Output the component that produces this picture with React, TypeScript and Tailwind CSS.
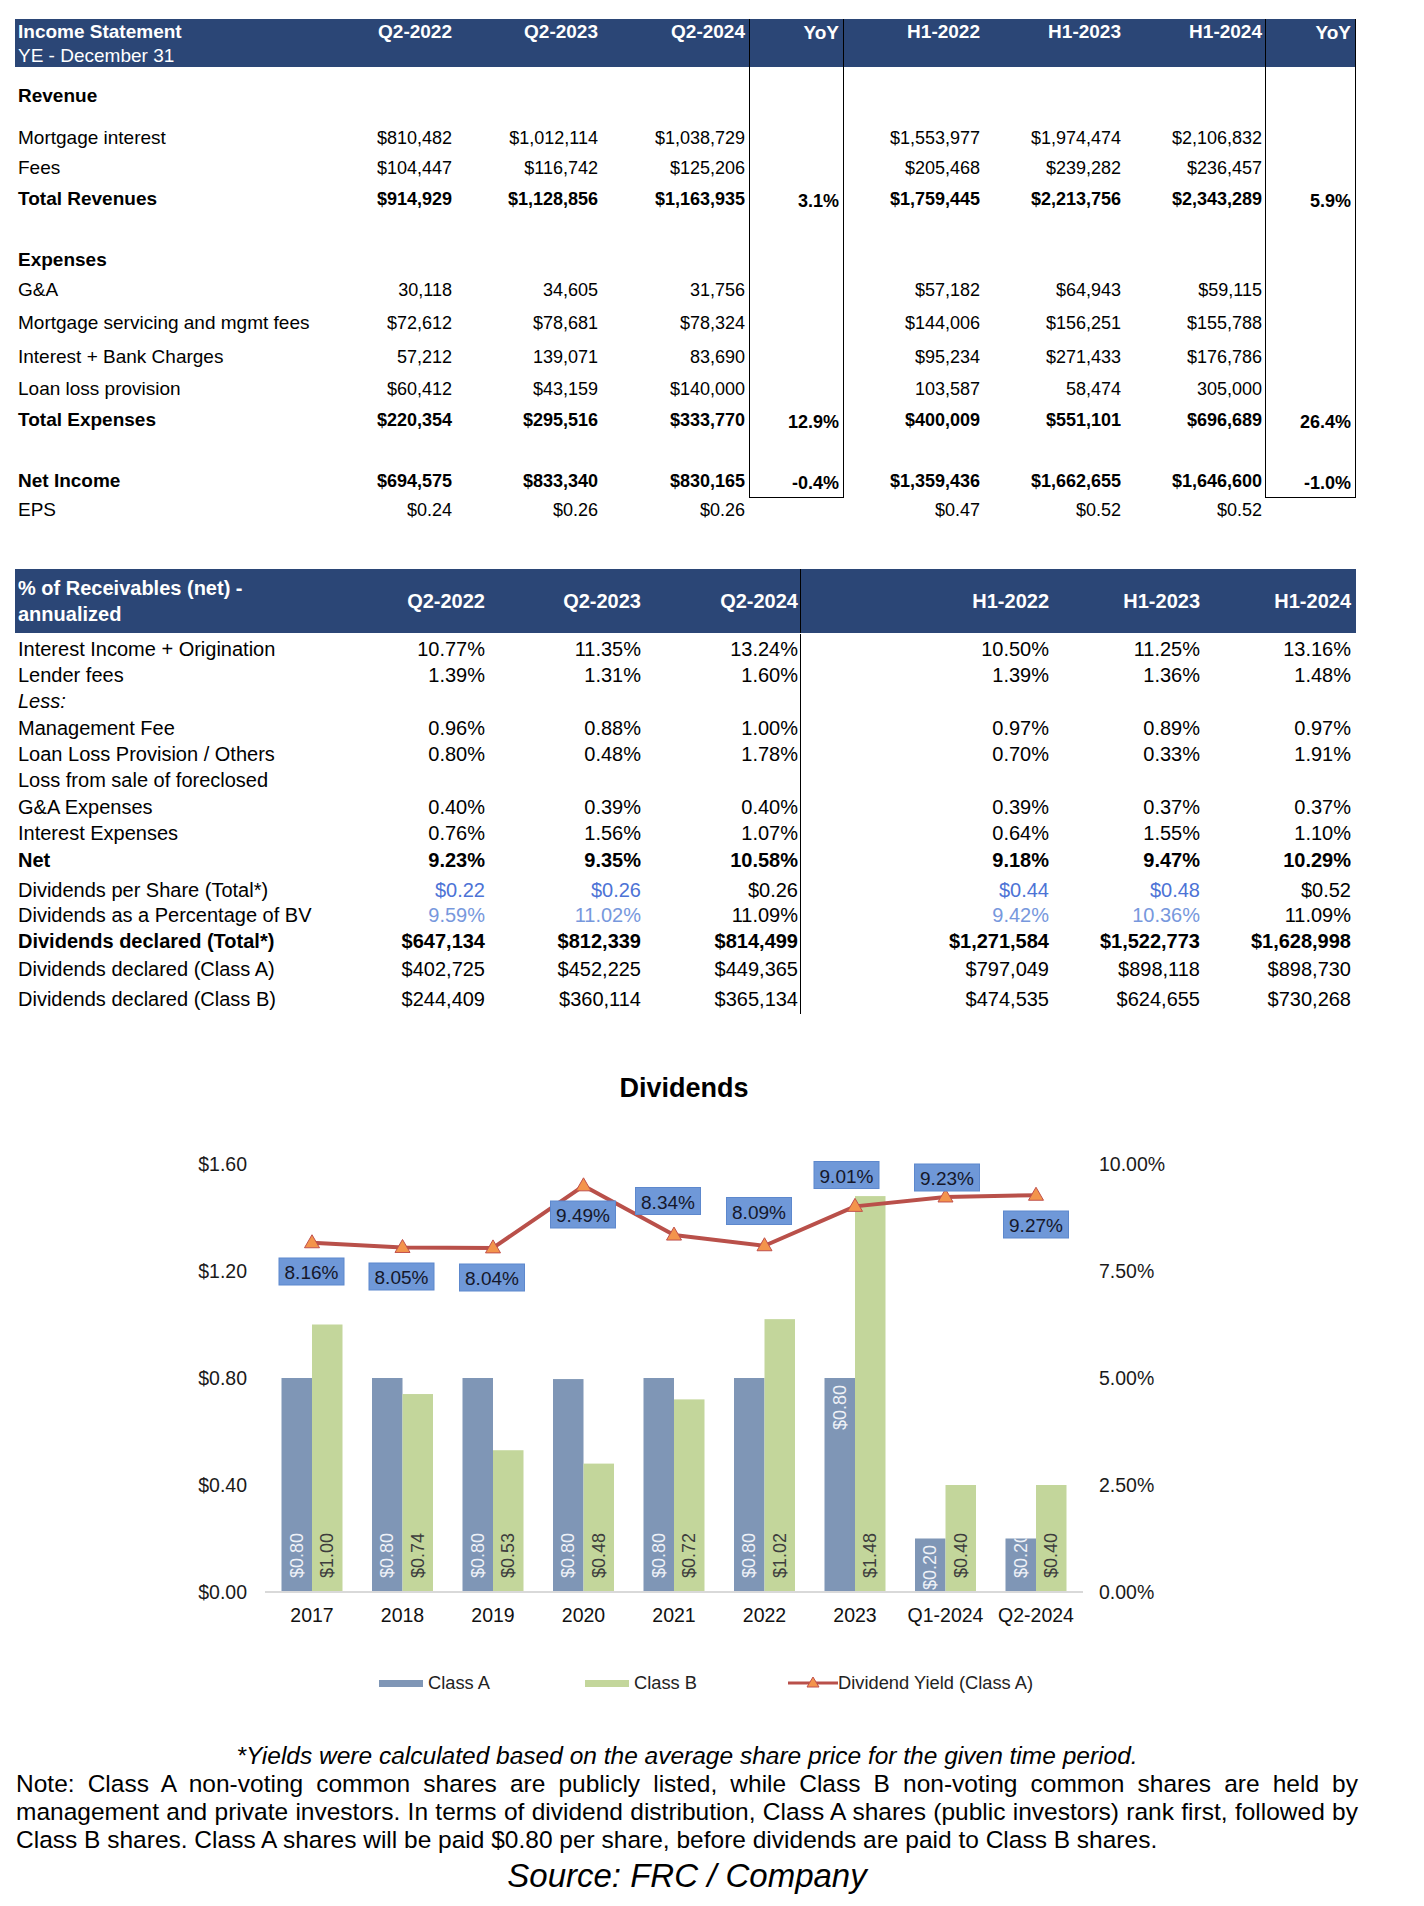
import React from 'react';

const t1Cols = 'grid grid-cols-[295px_144px_146px_149px_95px_138px_141px_142px_91px]';
const t1Pad = ['pr-[2px]', 'pr-[2px]', 'pr-[4px]', 'pr-[4px]', 'pr-[2px]', 'pr-[2px]', 'pr-[3px]', 'pr-[4px]'];

type Row1 = { label?: string; vals?: string[]; bold?: boolean; h: string; boxEnd?: boolean; noBox?: boolean };

const t1Rows: Row1[] = [
  { h: 'h-[14px]' },
  { label: 'Revenue', bold: true, h: 'h-[30px]' },
  { h: 'h-[12px]' },
  { label: 'Mortgage interest', h: 'h-[30px]', vals: ['$810,482', '$1,012,114', '$1,038,729', '', '$1,553,977', '$1,974,474', '$2,106,832', ''] },
  { label: 'Fees', h: 'h-[30px]', vals: ['$104,447', '$116,742', '$125,206', '', '$205,468', '$239,282', '$236,457', ''] },
  { label: 'Total Revenues', bold: true, h: 'h-[31px]', vals: ['$914,929', '$1,128,856', '$1,163,935', '3.1%', '$1,759,445', '$2,213,756', '$2,343,289', '5.9%'] },
  { h: 'h-[31px]' },
  { label: 'Expenses', bold: true, h: 'h-[30px]' },
  { label: 'G&A', h: 'h-[31px]', vals: ['30,118', '34,605', '31,756', '', '$57,182', '$64,943', '$59,115', ''] },
  { label: 'Mortgage servicing and mgmt fees', h: 'h-[34px]', vals: ['$72,612', '$78,681', '$78,324', '', '$144,006', '$156,251', '$155,788', ''] },
  { label: 'Interest + Bank Charges', h: 'h-[34px]', vals: ['57,212', '139,071', '83,690', '', '$95,234', '$271,433', '$176,786', ''] },
  { label: 'Loan loss provision', h: 'h-[30px]', vals: ['$60,412', '$43,159', '$140,000', '', '103,587', '58,474', '305,000', ''] },
  { label: 'Total Expenses', bold: true, h: 'h-[30px]', vals: ['$220,354', '$295,516', '$333,770', '12.9%', '$400,009', '$551,101', '$696,689', '26.4%'] },
  { h: 'h-[31px]' },
  { label: 'Net Income', bold: true, h: 'h-[29px]', boxEnd: true, vals: ['$694,575', '$833,340', '$830,165', '-0.4%', '$1,359,436', '$1,662,655', '$1,646,600', '-1.0%'] },
  { label: 'EPS', h: 'h-[32px]', noBox: true, vals: ['$0.24', '$0.26', '$0.26', '', '$0.47', '$0.52', '$0.52', ''] },
];

const t2Cols = 'grid grid-cols-[325px_147px_156px_158px_250px_151px_154px]';
const t2Pad = ['pr-[2px]', 'pr-[2px]', 'pr-[2px] border-r border-black', 'pr-[2px]', 'pr-[2px]', 'pr-[5px]'];
const dps = 'text-[#4d73d6]';
const bv = 'text-[#7798dd]';

type Row2 = { label: string; vals?: string[]; bold?: boolean; italic?: boolean; h: string; colors?: string[] };

const t2Rows: Row2[] = [
  { label: 'Interest Income + Origination', h: 'h-[27px] pt-[1px]', vals: ['10.77%', '11.35%', '13.24%', '10.50%', '11.25%', '13.16%'] },
  { label: 'Lender fees', h: 'h-[26px]', vals: ['1.39%', '1.31%', '1.60%', '1.39%', '1.36%', '1.48%'] },
  { label: 'Less:', italic: true, h: 'h-[27px]' },
  { label: 'Management Fee', h: 'h-[26px]', vals: ['0.96%', '0.88%', '1.00%', '0.97%', '0.89%', '0.97%'] },
  { label: 'Loan Loss Provision / Others', h: 'h-[26px]', vals: ['0.80%', '0.48%', '1.78%', '0.70%', '0.33%', '1.91%'] },
  { label: 'Loss from sale of foreclosed', h: 'h-[27px]' },
  { label: 'G&A Expenses', h: 'h-[26px]', vals: ['0.40%', '0.39%', '0.40%', '0.39%', '0.37%', '0.37%'] },
  { label: 'Interest Expenses', h: 'h-[27px]', vals: ['0.76%', '1.56%', '1.07%', '0.64%', '1.55%', '1.10%'] },
  { label: 'Net', bold: true, h: 'h-[30px]', vals: ['9.23%', '9.35%', '10.58%', '9.18%', '9.47%', '10.29%'] },
  { label: 'Dividends per Share (Total*)', h: 'h-[25px]', vals: ['$0.22', '$0.26', '$0.26', '$0.44', '$0.48', '$0.52'], colors: [dps, dps, '', dps, dps, ''] },
  { label: 'Dividends as a Percentage of BV', h: 'h-[26px]', vals: ['9.59%', '11.02%', '11.09%', '9.42%', '10.36%', '11.09%'], colors: [bv, bv, '', bv, bv, ''] },
  { label: 'Dividends declared (Total*)', bold: true, h: 'h-[28px]', vals: ['$647,134', '$812,339', '$814,499', '$1,271,584', '$1,522,773', '$1,628,998'] },
  { label: 'Dividends declared (Class A)', h: 'h-[30px]', vals: ['$402,725', '$452,225', '$449,365', '$797,049', '$898,118', '$898,730'] },
  { label: 'Dividends declared (Class B)', h: 'h-[29px]', vals: ['$244,409', '$360,114', '$365,134', '$474,535', '$624,655', '$730,268'] },
];

const cats = ['2017', '2018', '2019', '2020', '2021', '2022', '2023', 'Q1-2024', 'Q2-2024'];
const classA = [0.8, 0.8, 0.8, 0.796, 0.8, 0.8, 0.8, 0.2, 0.2];
const classB = [1.0, 0.74, 0.53, 0.48, 0.72, 1.02, 1.48, 0.4, 0.4];
const aText = ['$0.80', '$0.80', '$0.80', '$0.80', '$0.80', '$0.80', '$0.80', '$0.20', '$0.20'];
const bText = ['$1.00', '$0.74', '$0.53', '$0.48', '$0.72', '$1.02', '$1.48', '$0.40', '$0.40'];
const yields = [8.16, 8.05, 8.04, 9.49, 8.34, 8.09, 9.01, 9.23, 9.27];
// centers of the data label boxes (page coords)
const boxes = [
  [311.5, 1271.5], [401.5, 1276.5], [492, 1277.5], [583, 1214.5], [668, 1201],
  [759, 1211], [846.5, 1175], [947, 1177.5], [1036, 1224.5],
];

function IncomeStatement() {
  return (
    <div className="ml-[15px] w-[1341px]">
      <div className={`${t1Cols} h-[48px] bg-[#2b4676] text-[19px] text-white`}>
        <div className="flex flex-col pl-[3px]">
          <div className="flex h-[26px] items-center font-bold">Income Statement</div>
          <div className="flex h-[22px] items-center">YE - December 31</div>
        </div>
        {['Q2-2022', 'Q2-2023', 'Q2-2024', 'YoY', 'H1-2022', 'H1-2023', 'H1-2024', 'YoY'].map((c, i) => (
          <div key={i} className={`flex h-[26px] items-center justify-end font-bold ${t1Pad[i]} ${i === 3 || i === 7 ? 'h-[48px] items-start pt-[1px] border-x border-black' : ''}`}>
            <span className={i === 3 || i === 7 ? 'leading-[26px]' : ''}>{c}</span>
          </div>
        ))}
      </div>
      {t1Rows.map((r, ri) => (
        <div key={ri} className={`${t1Cols} ${r.h}`}>
          <div className={`flex items-center pl-[3px] text-[19px] whitespace-nowrap ${r.bold ? 'font-bold' : ''}`}>{r.label}</div>
          {Array.from({ length: 8 }).map((_, i) => {
            const yoy = i === 3 || i === 7;
            const v = r.vals ? r.vals[i] : '';
            return (
              <div
                key={i}
                className={`flex items-center justify-end text-[18px] whitespace-nowrap ${t1Pad[i]} ${r.bold ? 'font-bold' : ''} ${yoy && !r.noBox ? 'border-x border-black pt-[5px]' : ''} ${yoy && r.boxEnd ? 'border-b' : ''}`}
              >
                {v}
              </div>
            );
          })}
        </div>
      ))}
    </div>
  );
}

function Receivables() {
  return (
    <div className="mt-[43px] ml-[15px] w-[1341px]">
      <div className={`${t2Cols} h-[64px] bg-[#2b4676] text-[20px] font-bold text-white`}>
        <div className="flex flex-col justify-center pl-[3px]">
          <div className="h-[26px] leading-[26px]">% of Receivables (net) -</div>
          <div className="h-[26px] leading-[26px]">annualized</div>
        </div>
        {['Q2-2022', 'Q2-2023', 'Q2-2024', 'H1-2022', 'H1-2023', 'H1-2024'].map((c, i) => (
          <div key={c} className={`flex items-center justify-end ${t2Pad[i]}`}>{c}</div>
        ))}
      </div>
      {t2Rows.map((r) => (
        <div key={r.label} className={`${t2Cols} ${r.h} text-[20px]`}>
          <div className={`flex items-center pl-[3px] whitespace-nowrap ${r.bold ? 'font-bold' : ''} ${r.italic ? 'italic' : ''}`}>{r.label}</div>
          {Array.from({ length: 6 }).map((_, i) => (
            <div
              key={i}
              className={`flex items-center justify-end whitespace-nowrap ${t2Pad[i]} ${r.bold ? 'font-bold' : ''} ${r.colors ? r.colors[i] : ''}`}
            >
              {r.vals ? r.vals[i] : ''}
            </div>
          ))}
        </div>
      ))}
    </div>
  );
}

function DividendsChart() {
  const x = (i: number) => 312 + 90.5 * i;
  const yv = (v: number) => 1592 - v * 267.5;
  const yp = (p: number) => 1592 - p * 42.8;
  const line = yields.map((p, i) => `${x(i)},${yp(p)}`).join(' ');
  const bw = 30.5;

  return (
    <div>
      <div className="mt-[59px] ml-[16px] flex h-[32px] w-[1336px] items-center justify-center text-[27px] font-bold">Dividends</div>
      <svg width={1424} height={560} viewBox="0 1104 1424 560" className="block">
        <defs>
          <clipPath id="q2a">
            <rect x={x(8) - bw} y={yv(0.2)} width={bw} height={0.2 * 267.5} />
          </clipPath>
        </defs>

        {['$1.60', '$1.20', '$0.80', '$0.40', '$0.00'].map((t, i) => (
          <text key={t} x={247} y={1164 + i * 107} textAnchor="end" dominantBaseline="central" fontSize={19.5} fill="#1a1a1a">{t}</text>
        ))}
        {['10.00%', '7.50%', '5.00%', '2.50%', '0.00%'].map((t, i) => (
          <text key={t} x={1099} y={1164 + i * 107} textAnchor="start" dominantBaseline="central" fontSize={19.5} fill="#1a1a1a">{t}</text>
        ))}

        {cats.map((c, i) => (
          <g key={c}>
            <rect x={x(i) - bw} y={yv(classA[i])} width={bw} height={classA[i] * 267.5} fill="#7f96b6" />
            <rect x={x(i)} y={yv(classB[i])} width={bw} height={classB[i] * 267.5} fill="#c3d69b" />
          </g>
        ))}

        <line x1={265} y1={1592} x2={1083} y2={1592} stroke="#d9d9d9" strokeWidth={2} />

        {cats.map((c, i) => (
          <text key={c} x={x(i)} y={1615} textAnchor="middle" dominantBaseline="central" fontSize={19.5} fill="#111">{c}</text>
        ))}

        {cats.map((c, i) => {
          const bx = x(i) - bw / 2;
          let by = 1578;
          let anchor: 'start' | 'end' = 'start';
          if (i === 6) {
            by = 1385;
            anchor = 'end';
          }
          if (i === 7) by = 1590;
          return (
            <g key={`a${c}`} clipPath={i === 8 ? 'url(#q2a)' : undefined}>
              <text transform={`translate(${bx},${by}) rotate(-90)`} textAnchor={anchor} dominantBaseline="central" fontSize={18} fill="#eef1f7">{aText[i]}</text>
            </g>
          );
        })}
        {cats.map((c, i) => (
          <text key={`b${c}`} transform={`translate(${x(i) + bw / 2},1578) rotate(-90)`} textAnchor="start" dominantBaseline="central" fontSize={18} fill="#3d3d3d">{bText[i]}</text>
        ))}

        <polyline points={line} fill="none" stroke="#b9504a" strokeWidth={4} strokeLinejoin="round" />
        {yields.map((p, i) => {
          const px = x(i);
          const py = yp(p);
          return <polygon key={i} points={`${px},${py - 8} ${px - 7.5},${py + 5} ${px + 7.5},${py + 5}`} fill="#f3944c" stroke="#c0504d" strokeWidth={1} />;
        })}

        {boxes.map(([bx, by], i) => (
          <g key={`l${i}`}>
            <rect x={bx - 32.5} y={by - 13.5} width={65} height={27} fill="#6f98d8" stroke="#5d88cd" strokeWidth={1} />
            <text x={bx} y={by + 1} textAnchor="middle" dominantBaseline="central" fontSize={19} fill="#15172a">{yields[i].toFixed(2)}%</text>
          </g>
        ))}
      </svg>

      <div className="mt-[7px] flex h-[24px] items-center pl-[379px] text-[18.3px] text-[#222]">
        <div className="flex w-[206px] items-center">
          <span className="mr-[5px] h-[7px] w-[44px] bg-[#7f96b6]" />
          Class A
        </div>
        <div className="flex w-[203px] items-center">
          <span className="mr-[5px] h-[7px] w-[44px] bg-[#c3d69b]" />
          Class B
        </div>
        <div className="flex items-center">
          <svg width={50} height={16} className="block">
            <line x1={0} y1={8} x2={50} y2={8} stroke="#b9504a" strokeWidth={3} />
            <polygon points="25,2 19,12 31,12" fill="#f3944c" stroke="#c0504d" strokeWidth={1} />
          </svg>
          Dividend Yield (Class A)
        </div>
      </div>
    </div>
  );
}

function Notes() {
  return (
    <div className="mt-[47px] ml-[16px] w-[1342px] text-[24.5px] leading-[28px] text-black">
      <p className="text-center italic">*Yields were calculated based on the average share price for the given time period.</p>
      <p className="text-justify">
        Note: Class A non-voting common shares are publicly listed, while Class B non-voting common shares are held by
        management and private investors. In terms of dividend distribution, Class A shares (public investors) rank first,
        followed by Class B shares. Class A shares will be paid $0.80 per share, before dividends are paid to Class B shares.
      </p>
      <p className="mt-[4px] text-center text-[33px] leading-[36px] italic">Source: FRC / Company</p>
    </div>
  );
}

export default function App() {
  return (
    <div className="w-[1424px] bg-white pt-[19px] pb-[12px] font-['Liberation_Sans',Arial,Helvetica,sans-serif] text-black">
      <IncomeStatement />
      <Receivables />
      <DividendsChart />
      <Notes />
    </div>
  );
}
